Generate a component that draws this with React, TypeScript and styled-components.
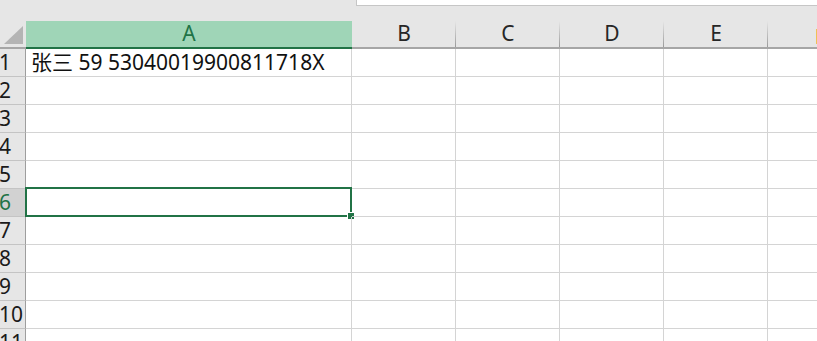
import styled, { createGlobalStyle } from 'styled-components';

const GlobalStyle = createGlobalStyle`
  html, body {
    margin: 0;
    padding: 0;
    background: #ffffff;
    overflow: hidden;
  }
  body {
    font-family: "Noto Sans", "Noto Sans CJK SC", sans-serif;
  }
`;

const COLS = ['A', 'B', 'C', 'D', 'E', 'F'];
const WIDTHS = [326, 104, 104, 104, 104, 104];
const ROWS = 11;
const ACTIVE_ROW = 6;

const Window = styled.div`
  width: 817px;
  height: 341px;
  overflow: hidden;
  background: #ffffff;
`;

const TopBar = styled.div`
  height: 21px;
  background: #e6e6e6;
  display: flex;
`;

const NameBox = styled.div`
  margin-left: 356px;
  flex: 1;
  height: 5px;
  background: #ffffff;
  border-left: 1px solid #c6c6c6;
  border-bottom: 1px solid #c6c6c6;
`;

const Row = styled.div`
  display: flex;
  height: 28px;
`;

const HeaderRow = styled(Row)`
  background: #e6e6e6;
  border-bottom: 2px solid #a6a6a6;
  height: 26px;
`;

const Corner = styled.div`
  width: 26px;
  flex: none;
  position: relative;
  svg {
    position: absolute;
    left: 0;
    top: 0;
  }
`;

const ColHeader = styled.div<{ $w: number; $active?: boolean }>`
  width: ${(p) => p.$w}px;
  flex: none;
  position: relative;
  display: flex;
  align-items: center;
  justify-content: center;
  font-size: 21px;
  line-height: 1;
  color: ${(p) => (p.$active ? '#217346' : '#262626')};
  background: ${(p) => (p.$active ? '#9fd5b7' : 'transparent')};
  box-shadow: ${(p) => (p.$active ? '0 2px 0 #217346' : 'none')};
  padding-bottom: 1px;
  box-sizing: border-box;
  &::after {
    content: '';
    position: absolute;
    right: 0;
    top: 0;
    bottom: 0;
    width: 1px;
    background: ${(p) =>
      p.$active ? 'transparent' : 'linear-gradient(#e6e6e6, #9a9a9a)'};
  }
`;

const Marker = styled.span`
  position: absolute;
  left: 48px;
  top: 8px;
  width: 2px;
  height: 15px;
  background: #f0c056;
`;

const RowHeader = styled.div<{ $active?: boolean }>`
  width: 26px;
  flex: none;
  box-sizing: border-box;
  background: ${(p) => (p.$active ? '#d2d2d2' : '#e6e6e6')};
  color: ${(p) => (p.$active ? '#217346' : '#1a1a1a')};
  border-right: 1px solid #9e9e9e;
  border-bottom: 1px solid #c4c4c4;
  font-size: 21px;
  line-height: 27px;
  white-space: nowrap;
  overflow: visible;
  text-indent: -1px;
`;

const Cell = styled.div<{ $w: number }>`
  width: ${(p) => p.$w}px;
  flex: none;
  box-sizing: border-box;
  border-right: 1px solid #d4d4d4;
  border-bottom: 1px solid #d4d4d4;
  position: relative;
  font-size: 21px;
  line-height: 27px;
  color: #111111;
  white-space: nowrap;
  padding-left: 5px;
`;

const Selection = styled.div`
  position: absolute;
  left: -1px;
  top: -2px;
  right: -1px;
  bottom: -1px;
  border: 2px solid #217346;
  pointer-events: none;
  &::after {
    content: '';
    position: absolute;
    right: -5px;
    bottom: -5px;
    width: 6px;
    height: 6px;
    background: #217346;
    border: 1px solid #ffffff;
  }
`;

const cellText: Record<string, string> = {
  A1: '张三 59 53040019900811718X',
};

export default function App() {
  return (
    <Window>
      <GlobalStyle />
      <TopBar>
        <NameBox />
      </TopBar>
      <HeaderRow>
        <Corner>
          <svg width="26" height="26" viewBox="0 0 26 26">
            <polygon points="4,23 23,23 23,5" fill="#b4b4b4" />
          </svg>
        </Corner>
        {COLS.map((c, i) => (
          <ColHeader key={c} $w={WIDTHS[i]} $active={c === 'A'}>
            {c === 'F' ? <Marker /> : c}
          </ColHeader>
        ))}
      </HeaderRow>
      {Array.from({ length: ROWS }, (_, r) => {
        const n = r + 1;
        return (
          <Row key={n}>
            <RowHeader $active={n === ACTIVE_ROW}>{n}</RowHeader>
            {COLS.map((c, i) => (
              <Cell key={c} $w={WIDTHS[i]}>
                {cellText[`${c}${n}`]}
                {c === 'A' && n === ACTIVE_ROW && <Selection />}
              </Cell>
            ))}
          </Row>
        );
      })}
    </Window>
  );
}
